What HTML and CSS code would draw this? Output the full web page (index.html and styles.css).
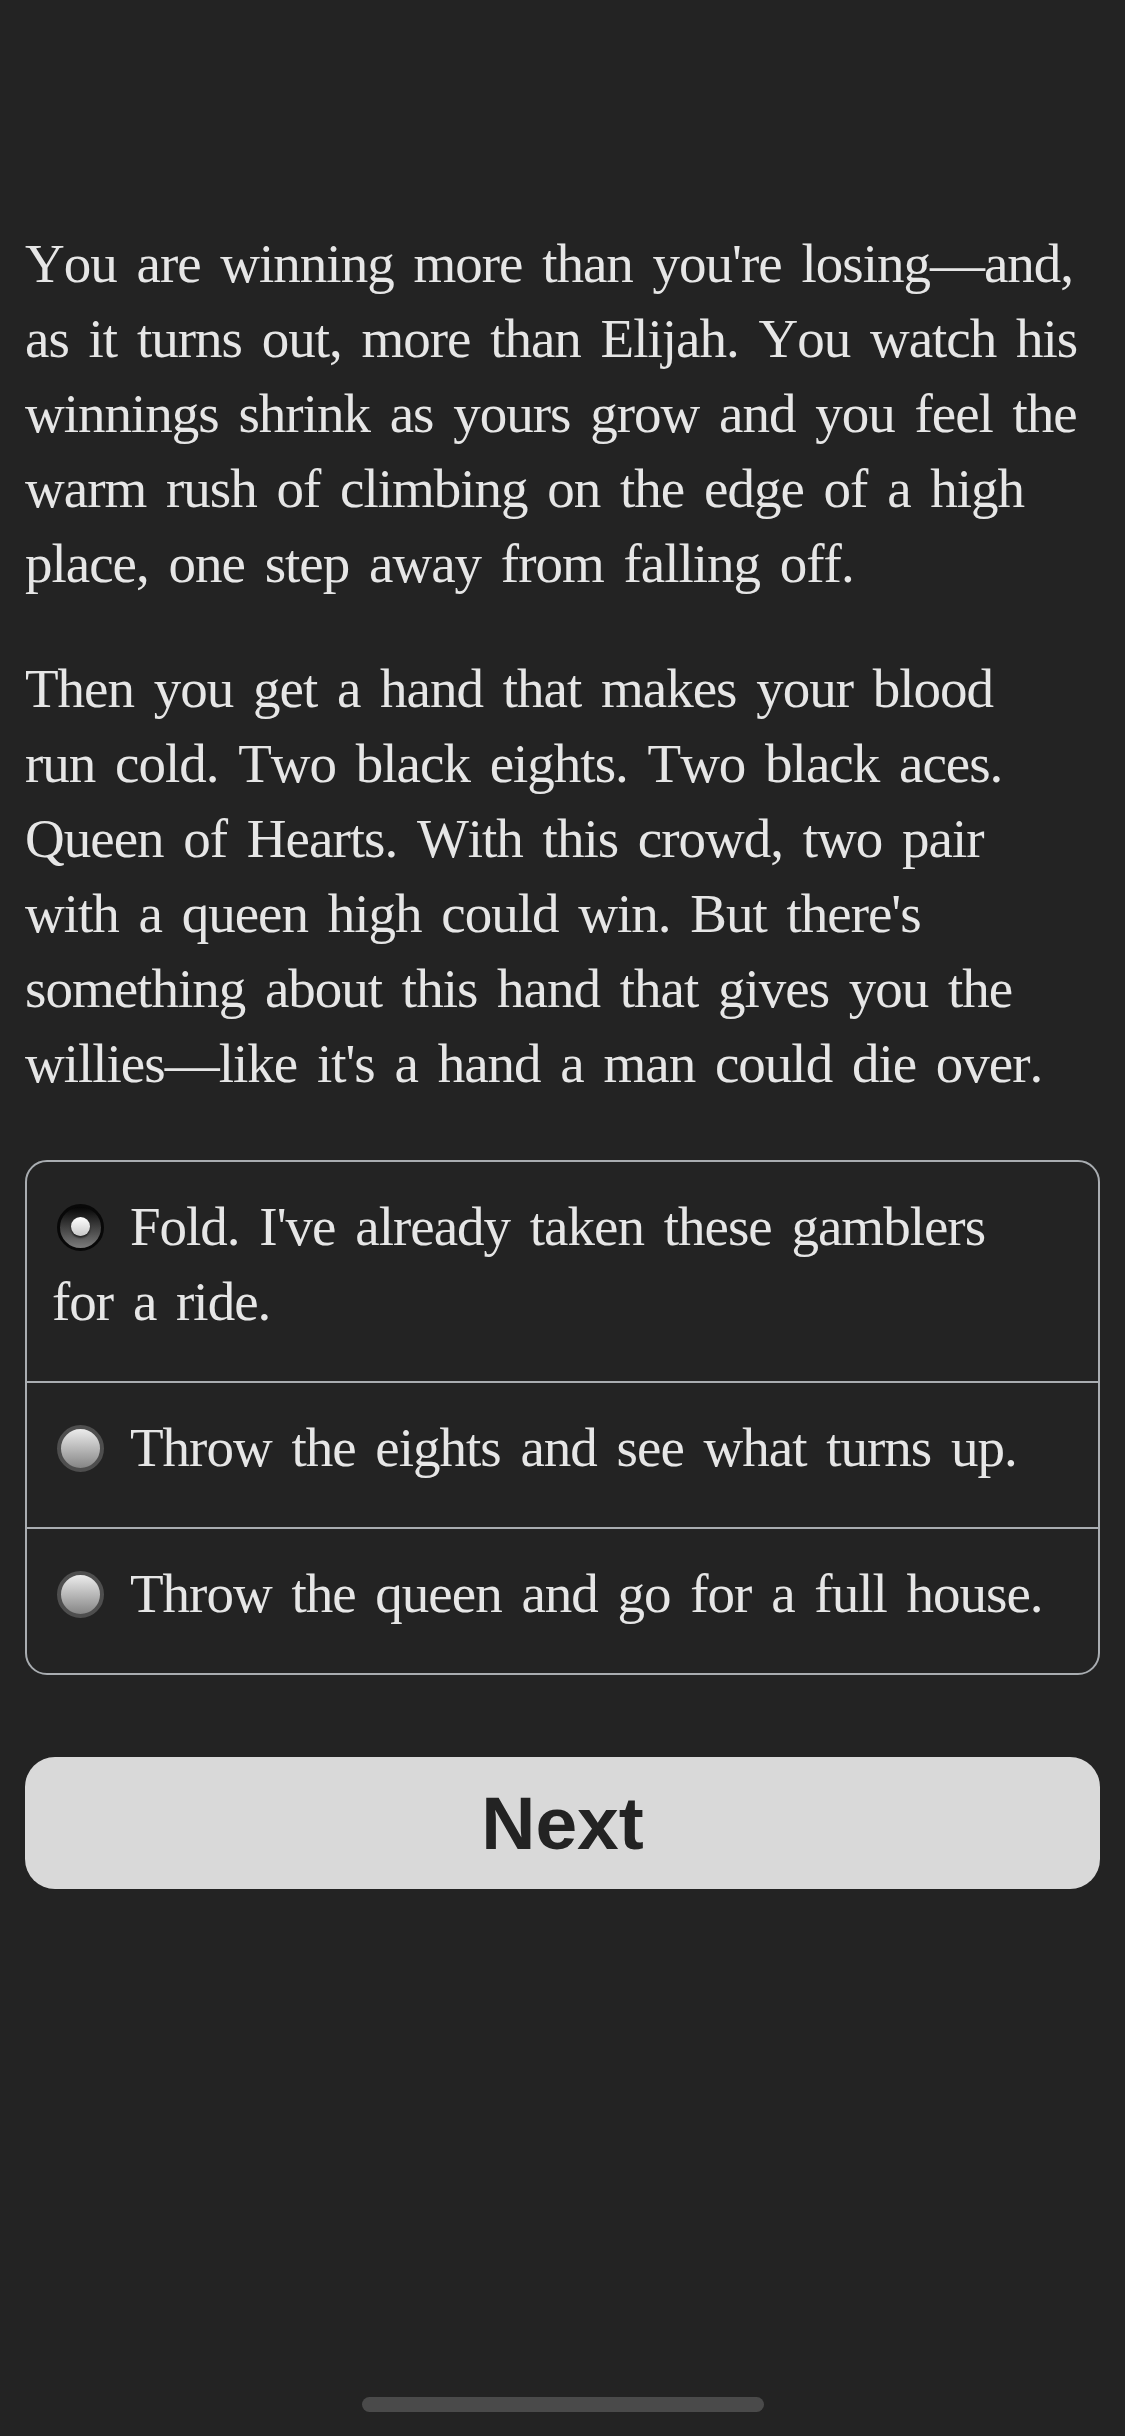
FILE: index.html
```html
<!DOCTYPE html>
<html>

<head>
    <meta charset="utf-8" />
    <link rel="stylesheet" href="styles.css">
</head>

<body>
    <div class="screen">
        <main class="story">
            <p class="passage">You are winning more than you're losing&mdash;and, as it turns out, more than Elijah. You watch his winnings shrink as yours grow and you feel the warm rush of climbing on the edge of a high place, one step away from falling off.</p>
            <p class="passage">Then you get a hand that makes your blood run cold. Two black eights. Two black aces. Queen of Hearts. With this crowd, two pair with a queen high could win. But there's something about this hand that gives you the willies&mdash;like it's a hand a man could die over.</p>

            <div class="choices">
                <div class="choice">
                    <span class="radio checked"></span>Fold. I've already taken these gamblers for a ride.
                </div>
                <div class="choice">
                    <span class="radio"></span>Throw the eights and see what turns up.
                </div>
                <div class="choice">
                    <span class="radio"></span>Throw the queen and go for a full house.
                </div>
            </div>

            <button class="next-btn">Next</button>
        </main>
        <div class="home-indicator"></div>
    </div>
</body>

</html>
```

FILE: styles.css
```css
body {
    margin: 0;
    background-color: #232323;
}

.screen {
    display: flex;
    flex-direction: column;
    min-height: 2436px;
}

.story {
    padding: 226px 25px 0;
    font-family: "Liberation Serif", serif;
    font-size: 55px;
    font-kerning: none;
    letter-spacing: -1px;
    word-spacing: 7px;
    color: #e6e6e6;
}

.passage {
    margin: 0 20px 50px 0;
    line-height: 75px;
}

.passage:last-of-type {
    margin-bottom: 59px;
}

.choices {
    border: 2px solid #a9adb1;
    border-radius: 22px;
}

.choice {
    padding: 27px 44px 42px 25px;
    line-height: 75px;
}

.choice + .choice {
    border-top: 2px solid #a9adb1;
}

/* radio drawn by hand, the native one looks different */
.radio {
    display: inline-block;
    box-sizing: border-box;
    width: 47px;
    height: 47px;
    margin: 0 26px 0 5px;
    vertical-align: -6px;
    border-radius: 50%;
    border: 4px solid #4e4e4e;
    background: linear-gradient(#ececec, #858585);
    position: relative;
}

.radio.checked {
    border: 3px solid #080808;
    background: linear-gradient(#050505, #7c7c7c);
}

.radio.checked::after {
    content: "";
    position: absolute;
    left: 11px;
    top: 10px;
    width: 19px;
    height: 19px;
    border-radius: 50%;
    background: linear-gradient(#ffffff, #c8c8c8);
    box-shadow: 0 2px 2px rgba(0, 0, 0, 0.6);
}

.next-btn {
    display: block;
    width: 100%;
    height: 132px;
    margin-top: 82px;
    border: none;
    border-radius: 30px;
    background-color: #d9d9d9;
    color: #232323;
    font-family: "Liberation Sans", Arial, sans-serif;
    font-weight: bold;
    font-size: 75px;
    letter-spacing: 0;
    word-spacing: 0;
    cursor: pointer;
}

.home-indicator {
    margin: auto auto 24px;
    width: 402px;
    height: 15px;
    border-radius: 8px;
    background-color: #4a4a4a;
}
```
